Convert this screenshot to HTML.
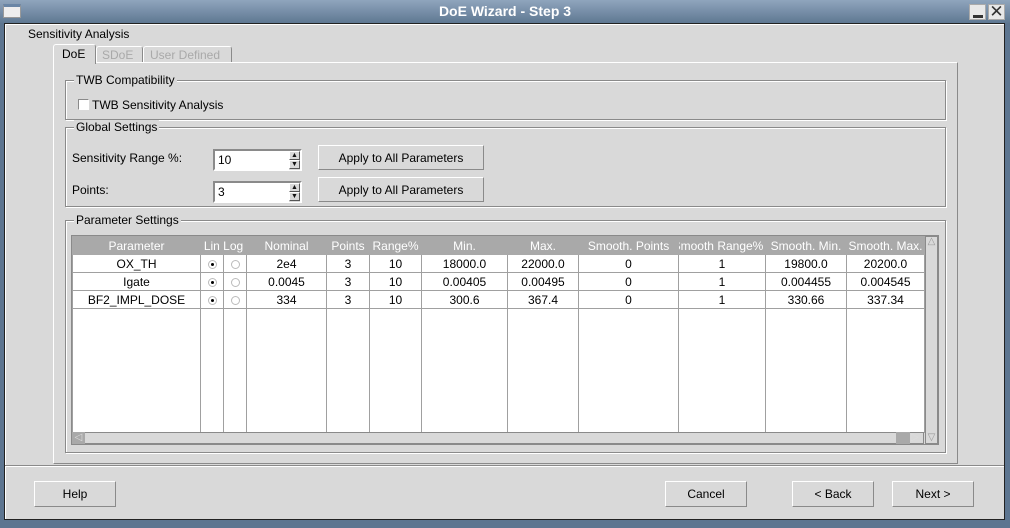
<!DOCTYPE html>
<html><head><meta charset="utf-8"><style>
*{margin:0;padding:0;box-sizing:border-box}
body{width:1010px;height:528px;background:#d9d9d9;font-family:"Liberation Sans","DejaVu Sans",sans-serif;font-size:12px;color:#000;position:relative;overflow:hidden}
.a{position:absolute}
.t{position:absolute;white-space:nowrap}
.grp{position:absolute;border:1px solid #8a8a8a;box-shadow:1px 1px 0 #fff inset,1px 1px 0 #fff}
.leg{position:absolute;background:#d9d9d9;padding:0 2px;top:-8px;left:8px;white-space:nowrap}
.btn{position:absolute;border:1px solid;border-color:#fff #8a8a8a #8a8a8a #fff;background:#d9d9d9;text-align:center;line-height:24px}
.inp{position:absolute;background:#fff;border:2px solid;border-color:#8a8a8a #fff #fff #8a8a8a;padding-left:3px;line-height:18px}
.spin{position:absolute;width:11px;height:19px;background:#d9d9d9}
.spin div{position:absolute;left:0;width:11px;height:9px;border:1px solid;border-color:#fff #555 #555 #fff;font-size:7px;line-height:7px;text-align:center;color:#111}
table{border-collapse:collapse;position:absolute;left:72px;top:236px;table-layout:fixed;background:#fff}
td,th{border:1px solid #a0a0a0;height:18px;text-align:center;padding:0;overflow:hidden;white-space:nowrap;font-weight:normal;font-size:12px}
th{background:#a9a9a9;color:#fff;border-color:#a9a9a9;height:18px}
.r{display:inline-block;width:9px;height:9px;border-radius:50%;border:1px solid #bbb;background:#fff;position:relative;vertical-align:middle}
.r.on::after{content:"";position:absolute;left:2px;top:2px;width:3px;height:3px;background:#000;border-radius:50%}
</style></head><body>
<div class="a" style="left:0;top:0;width:1010px;height:528px;background:#5d7590"></div>
<div class="a" style="left:0;top:0;width:1010px;height:23px;background:linear-gradient(#8fa5bd,#5f7892)"></div>
<div class="a" style="left:3px;top:4px;width:18px;height:14px;background:#eee;border:1px solid #999;border-top:3px solid #6a86a6"></div>
<div class="t" style="left:0;width:1010px;top:3px;text-align:center;color:#fff;font-weight:bold;font-size:14px">DoE Wizard - Step 3</div>
<div class="a" style="left:969px;top:4px;width:17px;height:16px;background:#e8e8e8;border:1px solid #aaa"><div class="a" style="left:3px;top:10px;width:10px;height:3px;background:#333"></div></div>
<div class="a" style="left:988px;top:4px;width:17px;height:16px;background:#e8e8e8;border:1px solid #aaa;font-size:17px;line-height:14px;text-align:center;color:#333">✕</div>
<div class="a" style="left:4px;top:23px;width:1001px;height:497px;background:#d9d9d9;border:1px solid #222;box-shadow:1px 1px 0 #fff inset"></div>
<div class="t" style="left:28px;top:27px">Sensitivity Analysis</div>
<div class="a" style="left:53px;top:62px;width:905px;height:402px;border:1px solid;border-color:#fff #8a8a8a #8a8a8a #fff"></div>
<div class="a" style="left:53px;top:44px;width:43px;height:20px;border:1px solid #fff;border-bottom:none;background:#d9d9d9;border-right-color:#8a8a8a;border-radius:3px 3px 0 0"></div>
<div class="t" style="left:62px;top:47px">DoE</div>
<div class="a" style="left:96px;top:46px;width:47px;height:16px;border:1px solid #fff;border-bottom:none;border-right-color:#8a8a8a;border-radius:3px 3px 0 0"></div>
<div class="t" style="left:102px;top:48px;color:#a9a9a9">SDoE</div>
<div class="a" style="left:143px;top:46px;width:89px;height:16px;border:1px solid #fff;border-bottom:none;border-right-color:#8a8a8a;border-radius:3px 3px 0 0"></div>
<div class="t" style="left:150px;top:48px;color:#a9a9a9">User Defined</div>
<div class="grp" style="left:65px;top:80px;width:881px;height:40px"><span class="leg">TWB Compatibility</span></div>
<div class="a" style="left:78px;top:99px;width:11px;height:11px;background:#fff;border:1px solid;border-color:#8a8a8a #fff #fff #8a8a8a"></div>
<div class="t" style="left:92px;top:98px">TWB Sensitivity Analysis</div>
<div class="grp" style="left:65px;top:127px;width:881px;height:80px"><span class="leg">Global Settings</span></div>
<div class="t" style="left:72px;top:151px">Sensitivity Range %:</div>
<div class="inp" style="left:213px;top:149px;width:89px;height:22px">10</div>
<div class="spin" style="left:289px;top:151px"><div style="top:0">▲</div><div style="top:9px">▼</div></div>
<div class="t" style="left:72px;top:183px">Points:</div>
<div class="inp" style="left:213px;top:181px;width:89px;height:22px">3</div>
<div class="spin" style="left:289px;top:183px"><div style="top:0">▲</div><div style="top:9px">▼</div></div>
<div class="btn" style="left:318px;top:145px;width:166px;height:25px">Apply to All Parameters</div>
<div class="btn" style="left:318px;top:177px;width:166px;height:25px">Apply to All Parameters</div>
<div class="grp" style="left:65px;top:220px;width:881px;height:233px"><span class="leg">Parameter Settings</span></div>
<div class="a" style="left:71px;top:235px;width:868px;height:210px;border:1px solid #8a8a8a;background:#d9d9d9"></div>
<table>
<colgroup><col style="width:128px"><col style="width:23px"><col style="width:23px"><col style="width:80px"><col style="width:43px"><col style="width:52px"><col style="width:86px"><col style="width:71px"><col style="width:100px"><col style="width:87px"><col style="width:81px"><col style="width:78px"></colgroup>
<tr><th>Parameter</th><th colspan="2">Lin Log</th><th>Nominal</th><th>Points</th><th>Range%</th><th>Min.</th><th>Max.</th><th>Smooth. Points</th><th style="text-indent:-8px">Smooth Range%</th><th>Smooth. Min.</th><th>Smooth. Max.</th></tr>
<tr><td>OX_TH</td><td><span class="r on"></span></td><td><span class="r"></span></td><td>2e4</td><td>3</td><td>10</td><td>18000.0</td><td>22000.0</td><td>0</td><td>1</td><td>19800.0</td><td>20200.0</td></tr>
<tr><td>Igate</td><td><span class="r on"></span></td><td><span class="r"></span></td><td>0.0045</td><td>3</td><td>10</td><td>0.00405</td><td>0.00495</td><td>0</td><td>1</td><td>0.004455</td><td>0.004545</td></tr>
<tr><td>BF2_IMPL_DOSE</td><td><span class="r on"></span></td><td><span class="r"></span></td><td>334</td><td>3</td><td>10</td><td>300.6</td><td>367.4</td><td>0</td><td>1</td><td>330.66</td><td>337.34</td></tr>
<tr><td style="height:124px"></td><td></td><td></td><td></td><td></td><td></td><td></td><td></td><td></td><td></td><td></td><td></td></tr>
</table>
<div class="a" style="left:72px;top:432px;width:852px;height:12px;background:#d9d9d9;border:1px solid #8a8a8a"></div>
<div class="a" style="left:72px;top:432px;width:13px;height:12px;background:#a9a9a9;color:#ddd;font-size:10px;line-height:11px;text-align:center">◁</div>
<div class="a" style="left:896px;top:432px;width:14px;height:12px;background:#a9a9a9"></div>
<div class="a" style="left:911px;top:432px;width:13px;height:12px;color:#ddd;font-size:10px;line-height:11px">▷</div>
<div class="a" style="left:925px;top:236px;width:13px;height:208px;background:#d9d9d9;border:1px solid #8a8a8a"></div>
<div class="a" style="left:926px;top:236px;width:11px;height:12px;color:#999;font-size:10px;line-height:12px;text-align:center">△</div>
<div class="a" style="left:926px;top:432px;width:11px;height:12px;color:#999;font-size:10px;line-height:12px;text-align:center">▽</div>
<div class="a" style="left:5px;top:465px;width:999px;height:2px;border-top:1px solid #8a8a8a;border-bottom:1px solid #fff"></div>
<div class="btn" style="left:34px;top:481px;width:82px;height:26px">Help</div>
<div class="btn" style="left:665px;top:481px;width:82px;height:26px">Cancel</div>
<div class="btn" style="left:792px;top:481px;width:82px;height:26px">&lt; Back</div>
<div class="btn" style="left:892px;top:481px;width:82px;height:26px">Next &gt;</div>
</body></html>
